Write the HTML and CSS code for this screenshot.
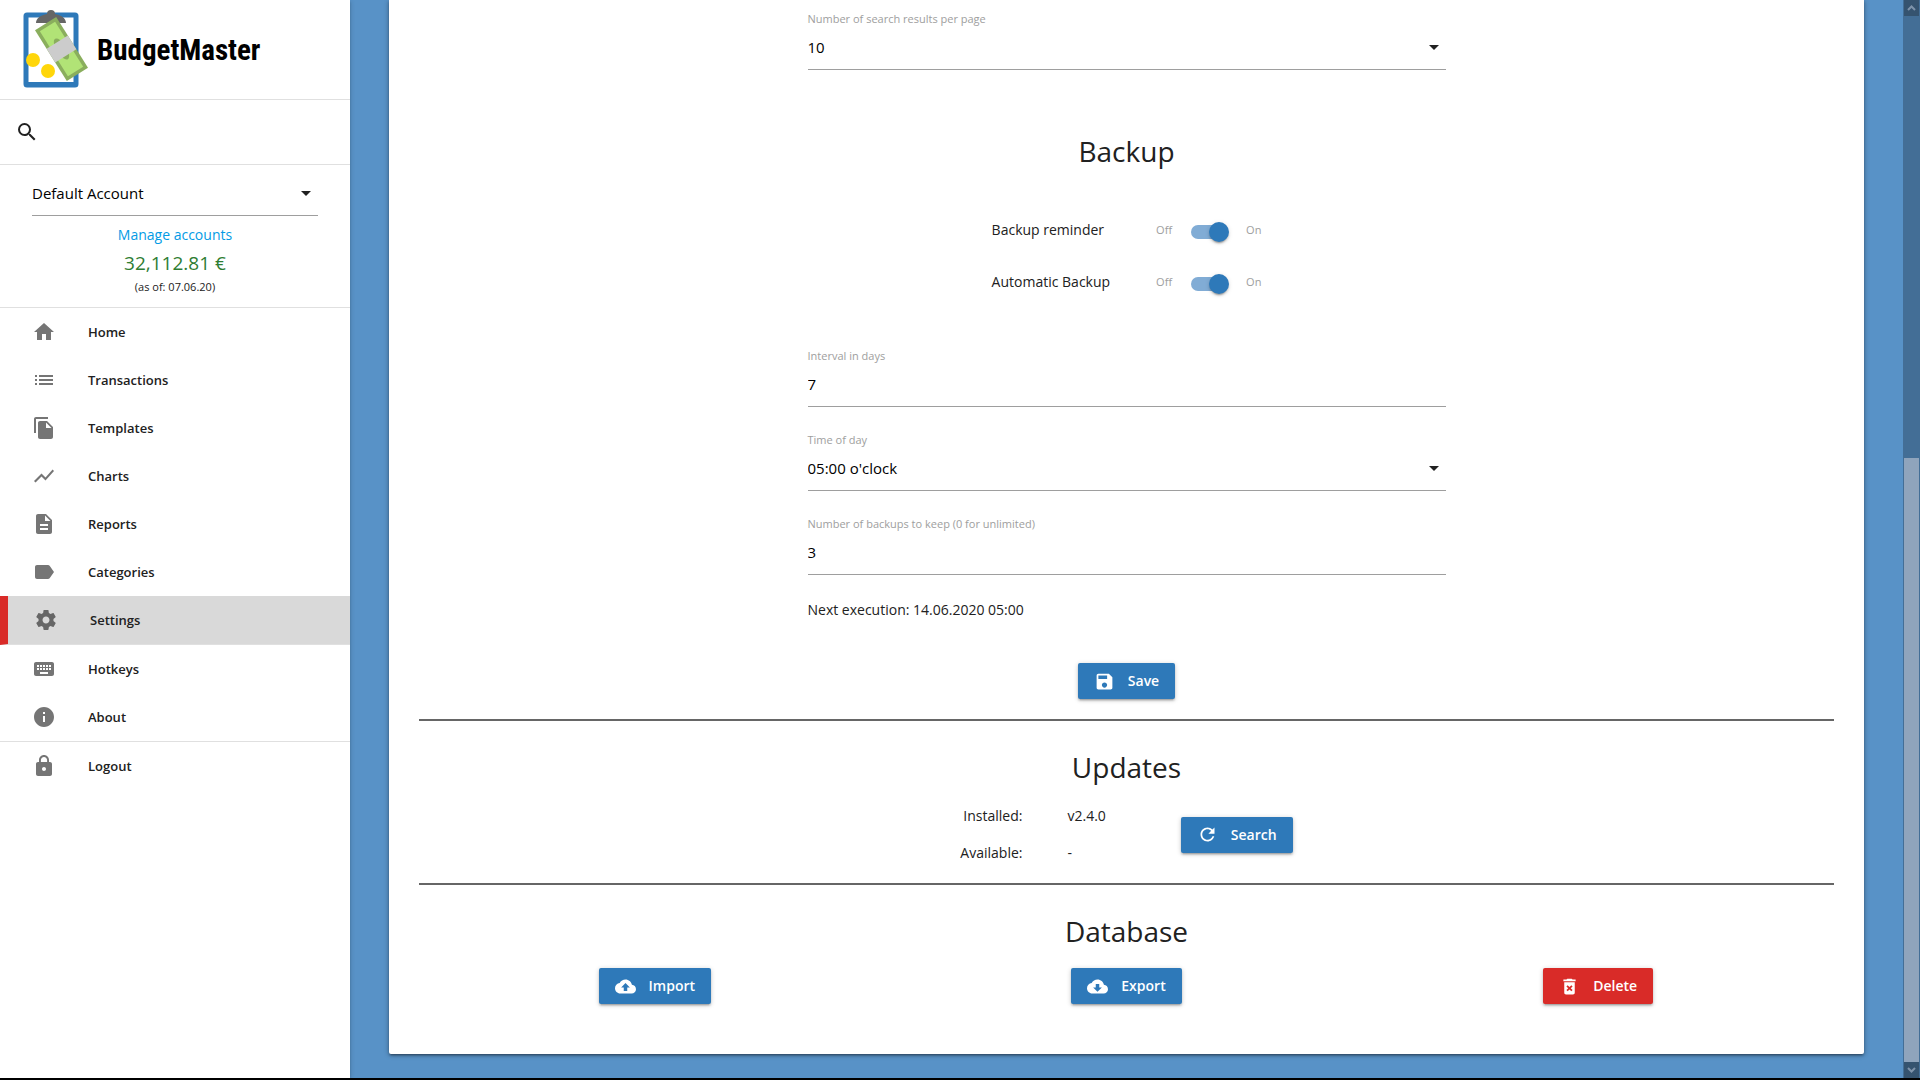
FILE: index.html
```html
<!DOCTYPE html>
<html lang="en">
<head>
<meta charset="utf-8">
<title>BudgetMaster - Settings</title>
<meta name="viewport" content="width=device-width, initial-scale=1">
<link rel="stylesheet" href="styles.css">
</head>
<body>
<div class="app">
  <aside class="sidebar">
    <a class="brand" href="#">
      <svg class="brand-mark" viewBox="0 0 70 84" aria-hidden="true">
        <rect x="3" y="7" width="50" height="70" rx="1" fill="#fff" stroke="#2e79b9" stroke-width="5"/>
        <path d="M3 74h50v4H3z" fill="#2e79b9"/>
        <path d="M13 15c0-5 5-8 11-9a4 4 0 0 1 8 0c6 1 11 4 11 9z" fill="#666"/>
        <g transform="translate(38.500 41) rotate(-32)">
          <rect x="-12.500" y="-30" width="25" height="60" fill="#8aae5d"/>
          <rect x="-9" y="-26.500" width="18" height="53" fill="#b1e376"/>
          <ellipse cx="0" cy="0" rx="5" ry="12" fill="#8aae5d"/>
          <rect x="-12.500" y="-8" width="25" height="16" fill="#ccc"/>
        </g>
        <circle cx="10" cy="52" r="7" fill="#ffd60a"/>
        <circle cx="25" cy="63" r="7" fill="#ffd60a"/>
      </svg>
      <span class="brand-name">BudgetMaster</span>
    </a>
    <div class="search">
      <button class="icon-button" type="button" aria-label="Search transactions">
        <svg class="icon" viewBox="0 0 24 24"><path d="M15.500 14h-.79l-.28-.27A6.471 6.471 0 0 0 16 9.500 6.500 6.500 0 1 0 9.500 16c1.610 0 3.090-.59 4.230-1.570l.27.28v.79l5 4.990L20.490 19l-4.990-5zm-6 0C7.010 14 5 11.990 5 9.500S7.010 5 9.500 5 14 7.010 14 9.500 11.990 14 9.500 14z"/></svg>
      </button>
    </div>
    <div class="account">
      <div class="select">
        <select class="control" aria-label="Account"><option>Default Account</option></select>
        <svg class="caret" viewBox="0 0 10 5"><path d="M0 0h10L5 5z"/></svg>
      </div>
      <a class="manage" href="#">Manage accounts</a>
      <div class="balance">32,112.81 €</div>
      <div class="as-of">(as of: 07.06.20)</div>
    </div>
    <nav class="menu">
      <a class="menu-item" href="#"><svg class="icon" viewBox="0 0 24 24"><path d="M10 20v-6h4v6h5v-8h3L12 3 2 12h3v8z"/></svg>Home</a>
      <a class="menu-item" href="#"><svg class="icon" viewBox="0 0 24 24"><path d="M3 13h2v-2H3v2zm0 4h2v-2H3v2zm0-8h2V7H3v2zm4 4h14v-2H7v2zm0 4h14v-2H7v2zM7 7v2h14V7H7z"/></svg>Transactions</a>
      <a class="menu-item" href="#"><svg class="icon" viewBox="0 0 24 24"><path d="M16 1H4c-1.100 0-2 .9-2 2v14h2V3h12V1zm-1 4l6 6v10c0 1.100-.9 2-2 2H7.990C6.890 23 6 22.100 6 21V7c0-1.100.89-2 1.990-2H15zm-1 7h5.500L14 6.500V12z"/></svg>Templates</a>
      <a class="menu-item" href="#"><svg class="icon" viewBox="0 0 24 24"><path d="M3.500 18.490l6-6.010 4 4L22 6.920l-1.410-1.410-7.090 7.970-4-4L2 16.990z"/></svg>Charts</a>
      <a class="menu-item" href="#"><svg class="icon" viewBox="0 0 24 24"><path d="M14 2H6c-1.100 0-1.990.9-1.990 2L4 20c0 1.100.89 2 1.990 2H18c1.100 0 2-.9 2-2V8l-6-6zm2 16H8v-2h8v2zm0-4H8v-2h8v2zm-3-5V3.500L18.500 9H13z"/></svg>Reports</a>
      <a class="menu-item" href="#"><svg class="icon" viewBox="0 0 24 24"><path d="M17.630 5.840C17.270 5.330 16.670 5 16 5L5 5.010C3.900 5.010 3 5.900 3 7v10c0 1.100.9 1.990 2 1.990L16 19c.67 0 1.270-.33 1.630-.84L22 12l-4.370-6.160z"/></svg>Categories</a>
      <a class="menu-item active" href="#" aria-current="page"><svg class="icon" viewBox="0 0 24 24"><path d="M19.430 12.980c.04-.32.07-.64.07-.98s-.03-.66-.07-.98l2.110-1.650c.19-.15.24-.42.12-.64l-2-3.460c-.12-.22-.39-.3-.61-.22l-2.490 1c-.52-.4-1.080-.73-1.690-.98l-.38-2.650C14.460 2.180 14.250 2 14 2h-4c-.25 0-.46.18-.49.42l-.38 2.650c-.61.25-1.170.59-1.690.98l-2.490-1c-.23-.09-.49 0-.61.22l-2 3.460c-.13.22-.07.49.12.64l2.110 1.650c-.04.32-.07.65-.07.98s.03.66.07.98l-2.110 1.650c-.19.15-.24.42-.12.64l2 3.460c.12.22.39.3.61.22l2.490-1c.52.4 1.080.73 1.690.98l.38 2.650c.03.24.24.42.49.42h4c.25 0 .46-.18.49-.42l.38-2.650c.61-.25 1.170-.59 1.690-.98l2.490 1c.23.09.49 0 .61-.22l2-3.460c.12-.22.07-.49-.12-.64l-2.110-1.650zM12 15.500c-1.930 0-3.500-1.570-3.500-3.500s1.570-3.500 3.500-3.500 3.500 1.570 3.500 3.500-1.570 3.500-3.500 3.500z"/></svg>Settings</a>
      <a class="menu-item" href="#"><svg class="icon" viewBox="0 0 24 24"><path d="M20 5H4c-1.100 0-1.990.9-1.990 2L2 17c0 1.100.9 2 2 2h16c1.100 0 2-.9 2-2V7c0-1.100-.9-2-2-2zm-9 3h2v2h-2V8zm0 3h2v2h-2v-2zM8 8h2v2H8V8zm0 3h2v2H8v-2zm-1 2H5v-2h2v2zm0-3H5V8h2v2zm9 7H8v-2h8v2zm0-4h-2v-2h2v2zm0-3h-2V8h2v2zm3 3h-2v-2h2v2zm0-3h-2V8h2v2z"/></svg>Hotkeys</a>
      <a class="menu-item" href="#"><svg class="icon" viewBox="0 0 24 24"><path d="M12 2C6.480 2 2 6.480 2 12s4.480 10 10 10 10-4.480 10-10S17.520 2 12 2zm1 15h-2v-6h2v6zm0-8h-2V7h2v2z"/></svg>About</a>
      <a class="menu-item logout" href="#"><svg class="icon" viewBox="0 0 24 24"><path d="M18 8h-1V6c0-2.760-2.240-5-5-5S7 3.240 7 6v2H6c-1.100 0-2 .9-2 2v10c0 1.100.9 2 2 2h12c1.100 0 2-.9 2-2V10c0-1.100-.9-2-2-2zm-6 9c-1.100 0-2-.9-2-2s.9-2 2-2 2 .9 2 2-.9 2-2 2zm3.100-9H8.900V6c0-1.710 1.390-3.100 3.100-3.100 1.710 0 3.100 1.390 3.100 3.100v2z"/></svg>Logout</a>
    </nav>
  </aside>

  <main class="content">
    <div class="card">
      <form class="settings" id="settings-form">
        <div class="field">
          <label class="field-label" for="per-page">Number of search results per page</label>
          <div class="select">
            <select class="control" id="per-page"><option>10</option></select>
            <svg class="caret" viewBox="0 0 10 5"><path d="M0 0h10L5 5z"/></svg>
          </div>
        </div>

        <h2 class="title backup-title">Backup</h2>

        <div class="switches">
          <label for="reminder">Backup reminder</label>
          <span class="state">Off</span>
          <input class="switch" type="checkbox" id="reminder" checked>
          <span class="state">On</span>
          <label for="auto-backup">Automatic Backup</label>
          <span class="state">Off</span>
          <input class="switch" type="checkbox" id="auto-backup" checked>
          <span class="state">On</span>
        </div>

        <div class="fields">
          <div class="field">
            <label class="field-label" for="interval">Interval in days</label>
            <input class="control" id="interval" type="text" value="7">
          </div>
          <div class="field">
            <label class="field-label" for="time">Time of day</label>
            <div class="select">
              <select class="control" id="time"><option>05:00 o'clock</option></select>
              <svg class="caret" viewBox="0 0 10 5"><path d="M0 0h10L5 5z"/></svg>
            </div>
          </div>
          <div class="field">
            <label class="field-label" for="keep">Number of backups to keep (0 for unlimited)</label>
            <input class="control" id="keep" type="text" value="3">
          </div>
        </div>
        <p class="next">Next execution: 14.06.2020 05:00</p>

        <button class="button" type="submit"><svg class="button-icon" viewBox="0 0 24 24"><path d="M17 3H5c-1.110 0-2 .9-2 2v14c0 1.100.89 2 2 2h14c1.100 0 2-.9 2-2V7l-4-4zm-5 16c-1.660 0-3-1.340-3-3s1.340-3 3-3 3 1.340 3 3-1.340 3-3 3zm3-10H5V5h10v4z"/></svg>Save</button>
      </form>

      <section class="section">
        <h2 class="title">Updates</h2>
        <div class="updates">
          <dl class="versions">
            <dt>Installed:</dt><dd>v2.4.0</dd>
            <dt>Available:</dt><dd>-</dd>
          </dl>
          <button class="button" type="button"><svg class="button-icon" viewBox="0 0 24 24"><path d="M17.650 6.350C16.200 4.900 14.210 4 12 4c-4.420 0-7.990 3.580-7.990 8s3.570 8 7.990 8c3.730 0 6.840-2.550 7.730-6h-2.080c-.82 2.330-3.040 4-5.650 4-3.310 0-6-2.690-6-6s2.690-6 6-6c1.660 0 3.140.69 4.220 1.780L13 11h7V4l-2.350 2.350z"/></svg>Search</button>
        </div>
      </section>

      <section class="section">
        <h2 class="title">Database</h2>
        <div class="database">
          <button class="button" type="button"><svg class="button-icon" viewBox="0 0 24 24"><path d="M19.350 10.040C18.670 6.590 15.640 4 12 4 9.110 4 6.600 5.640 5.350 8.040 2.340 8.360 0 10.910 0 14c0 3.310 2.690 6 6 6h13c2.760 0 5-2.240 5-5 0-2.640-2.050-4.780-4.650-4.960zM14 13v4h-4v-4H7l5-5 5 5h-3z"/></svg>Import</button>
          <button class="button" type="button"><svg class="button-icon" viewBox="0 0 24 24"><path d="M19.350 10.040C18.670 6.590 15.640 4 12 4 9.110 4 6.600 5.640 5.350 8.040 2.340 8.360 0 10.910 0 14c0 3.310 2.690 6 6 6h13c2.760 0 5-2.240 5-5 0-2.640-2.050-4.780-4.650-4.960zM17 13l-5 5-5-5h3V9h4v4h3z"/></svg>Export</button>
          <button class="button danger" type="button"><svg class="button-icon" viewBox="0 0 24 24"><path d="M6 19c0 1.100.9 2 2 2h8c1.100 0 2-.9 2-2V7H6v12zm2.460-7.120l1.410-1.410L12 12.590l2.120-2.120 1.410 1.410L13.410 14l2.120 2.120-1.410 1.410L12 15.410l-2.120 2.120-1.410-1.410L10.590 14l-2.130-2.120zM15.500 4l-1-1h-5l-1 1H5v2h14V4z"/></svg>Delete</button>
        </div>
      </section>
    </div>
  </main>

  <div class="scrollbar" aria-hidden="true">
    <svg class="scroll-arrow" viewBox="0 0 15 16"><path d="M4 10l3.500-3.500L11 10" /></svg>
    <div class="scroll-thumb"></div>
    <svg class="scroll-arrow" viewBox="0 0 15 16"><path d="M4 6l3.500 3.500L11 6" /></svg>
  </div>
</div>
</body>
</html>
```
FILE: styles.css
```css
* {
  box-sizing: border-box;
}

body {
  margin: 0;
  background: #5892c7;
  color: #212121;
  font-family: "Open Sans", "Noto Sans", sans-serif;
  font-size: 14px;
  line-height: 24px;
}

.app {
  display: flex;
  min-height: 100vh;
  border-bottom: 2px solid #000;
}

a {
  color: inherit;
  text-decoration: none;
}

.icon {
  width: 24px;
  height: 24px;
  fill: #757575;
}

/* Sidebar */

.sidebar {
  flex: 0 0 350px;
  background: #fff;
  box-shadow: 0 2px 2px 0 rgba(0, 0, 0, .14), 0 1px 5px 0 rgba(0, 0, 0, .2);
}

.brand {
  display: flex;
  align-items: center;
  gap: 4px;
  height: 100px;
  padding-left: 23px;
  border-bottom: 1px solid #e0e0e0;
}

.brand-mark {
  width: 70px;
  height: 84px;
}

.brand-name {
  color: #000;
  font-family: "Liberation Sans Narrow", "Roboto Condensed", "Open Sans Condensed", sans-serif;
  font-size: 29px;
  font-weight: 700;
}

.search {
  display: flex;
  align-items: center;
  height: 65px;
  padding-left: 15px;
  border-bottom: 1px solid #e0e0e0;
}

.icon-button {
  display: flex;
  padding: 0;
  border: 0;
  background: none;
}

.icon-button .icon {
  fill: #212121;
}

.account {
  padding: 8px 32px;
  border-bottom: 1px solid #e0e0e0;
  text-align: center;
}

.manage {
  display: block;
  margin-top: 7px;
  color: #039be5;
}

.balance {
  color: #2e7d32;
  font-size: 19px;
  line-height: 32px;
}

.as-of {
  font-size: 11px;
  line-height: 16px;
  padding-bottom: 4px;
}

.menu-item {
  display: flex;
  align-items: center;
  gap: 32px;
  height: 48px;
  padding-left: 32px;
  font-size: 13px;
  font-weight: 600;
}

.menu-item.active {
  height: 49px;
  padding-left: 26px;
  border-left: 8px solid #d92b28;
  border-bottom: 1px solid #e0e0e0;
  background: #d9d9d9;
}

.menu-item.active .icon {
  fill: #666;
}

.menu-item.logout {
  height: 49px;
  border-top: 1px solid #e0e0e0;
}

/* Form controls */

.select {
  display: grid;
  align-items: center;
}

.select > * {
  grid-area: 1 / 1;
}

.control {
  width: 100%;
  height: 43px;
  padding: 0 0 3px;
  border: 0;
  border-bottom: 1px solid #9e9e9e;
  border-radius: 0;
  outline: 0;
  appearance: none;
  background: transparent;
  color: #000;
  font: inherit;
  font-size: 15px;
}

.caret {
  justify-self: end;
  width: 10px;
  height: 5px;
  margin: 0 7px 3px 0;
  fill: #212121;
  pointer-events: none;
}

.field-label {
  display: block;
  color: #9e9e9e;
  font-size: 11px;
  line-height: 16px;
}

.switches {
  display: grid;
  grid-template-columns: auto auto auto auto;
  justify-content: center;
  align-items: center;
  row-gap: 28px;
  margin: 47px 0 54px;
}

.state {
  color: #9e9e9e;
  font-size: 11px;
}

.switches label + .state {
  margin-left: 46px;
}

.switch {
  display: flex;
  align-items: center;
  justify-content: flex-end;
  width: 36px;
  height: 14px;
  margin: 3px 19px 0;
  border-radius: 8px;
  appearance: none;
  background: #81acd5;
}

.switch::before {
  content: "";
  flex: none;
  width: 20px;
  height: 20px;
  margin-right: -2px;
  border-radius: 50%;
  background: #2e79b9;
  box-shadow: 0 3px 1px -2px rgba(0, 0, 0, .2), 0 2px 2px 0 rgba(0, 0, 0, .14), 0 1px 5px 0 rgba(0, 0, 0, .12);
}

.button {
  display: inline-flex;
  align-items: center;
  gap: 13px;
  height: 36px;
  padding: 0 16px;
  border: 0;
  border-radius: 2px;
  background: #2e79b9;
  box-shadow: 0 2px 2px 0 rgba(0, 0, 0, .14), 0 3px 1px -2px rgba(0, 0, 0, .12), 0 1px 5px 0 rgba(0, 0, 0, .2);
  color: #fff;
  font: inherit;
  font-weight: 600;
}

.button.danger {
  background: #d92b28;
}

.button-icon {
  width: 21px;
  height: 21px;
  fill: #fff;
}

/* Settings card */

.content {
  flex: 1;
  min-width: 0;
  padding: 0 39px 24px;
}

.card {
  padding: 11px 30px 50px;
  border-radius: 0 0 2px 2px;
  background: #fff;
  box-shadow: 0 2px 2px 0 rgba(0, 0, 0, .14), 0 3px 1px -2px rgba(0, 0, 0, .12), 0 1px 5px 0 rgba(0, 0, 0, .4);
}

.settings {
  display: flex;
  flex-direction: column;
  align-items: center;
  padding-bottom: 20px;
}

.settings > .field,
.fields,
.next {
  width: 100%;
  max-width: 638px;
}

.fields {
  display: grid;
  gap: 25px;
}

.title {
  margin: 0;
  font-size: 28px;
  font-weight: 400;
  line-height: 40px;
  text-align: center;
}

.backup-title {
  margin-top: 61px;
}

.next {
  margin: 23px 0 41px;
}

.section {
  padding-top: 26px;
  border-top: 2px solid #666;
}

.updates {
  display: flex;
  justify-content: center;
  align-items: center;
  gap: 75px;
  margin: 17px 0 18px;
}

.versions {
  display: grid;
  grid-template-columns: auto auto;
  gap: 13px 45px;
  margin: 0;
}

.versions dt {
  text-align: right;
}

.versions dd {
  margin: 0;
}

.database {
  display: grid;
  grid-template-columns: repeat(3, 1fr);
  justify-items: center;
  margin-top: 17px;
}

/* Page scrollbar */

.scrollbar {
  display: flex;
  flex: 0 0 17px;
  flex-direction: column;
  justify-content: space-between;
  padding: 0 1px;
  background: #436e96;
}

.scroll-arrow {
  width: 15px;
  height: 16px;
  background: #35536f;
  fill: none;
  stroke: #7e93aa;
  stroke-width: 2;
}

.scroll-thumb {
  height: 56%;
  margin-top: auto;
  background: #8fa4bc;
}
```
